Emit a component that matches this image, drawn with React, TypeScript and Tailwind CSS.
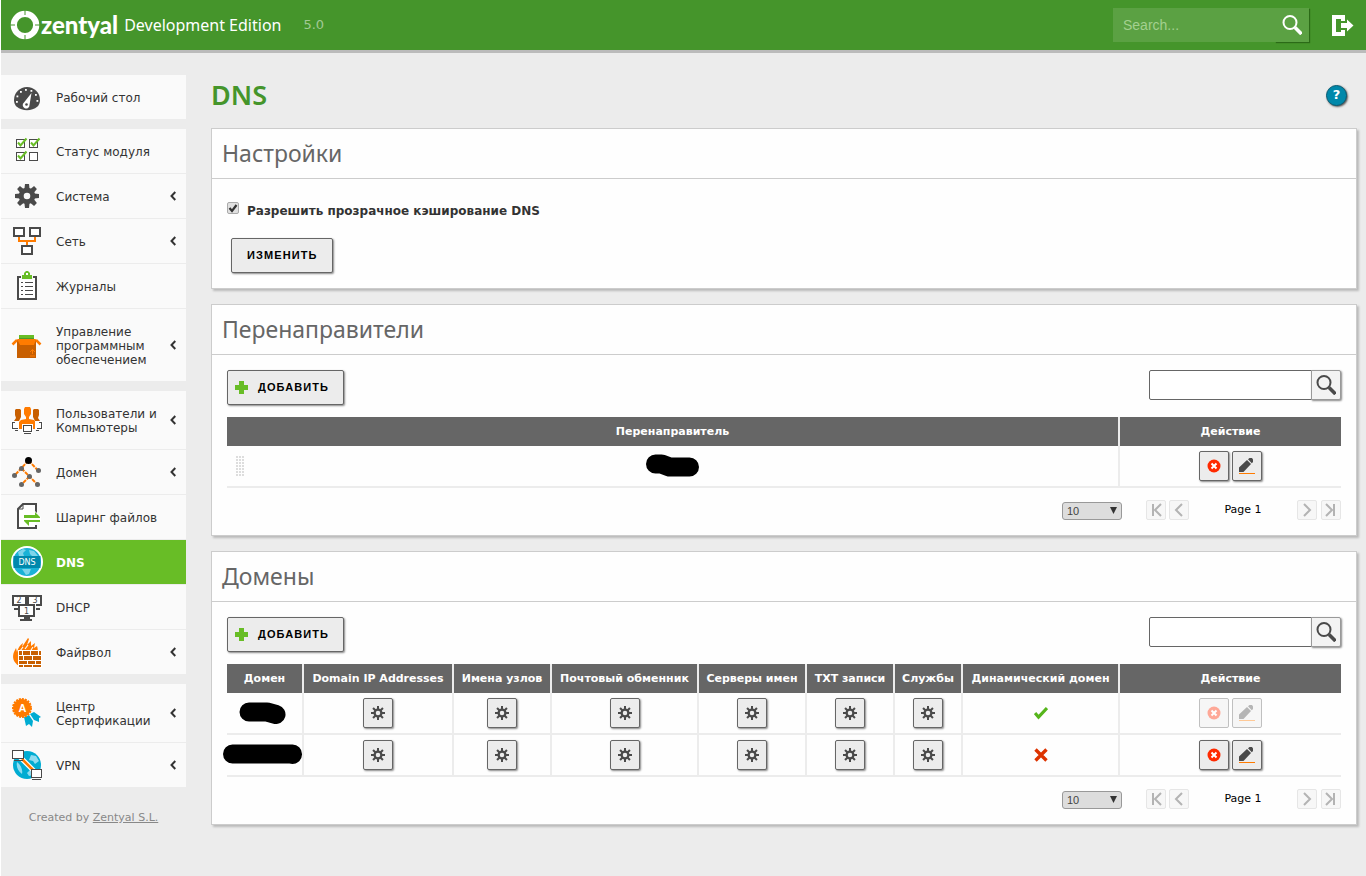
import { useState } from "react";
import type { ReactNode } from "react";
import clsx from "clsx";

const DARK = "#4a4a4a";
const ORANGE = "#ff7b00";
const BROWN = "#c85f00";
const GREEN = "#68bd26";
const TEAL = "#00acd2";

/* ---------- menu icons, all on a 32x32 grid ---------- */

function MenuSvg({ children }: { children: ReactNode }) {
  return (
    <svg viewBox="0 0 32 32" className="-my-2.5 h-8 w-8 shrink-0" aria-hidden="true">
      {children}
    </svg>
  );
}

function DashboardIcon() {
  const dots = [
    [6, 21], [6.5, 15.5], [10, 11], [15, 9], [20.5, 10], [25, 14], [26.5, 20],
  ];
  return (
    <MenuSvg>
      <path d="M3 19a13 13 0 0 1 26 0c0 3-1 5-2.500 6.500-6 5-15 5-21 0C4 24 3 22 3 19z" fill={DARK} />
      {dots.map(([x, y]) => (
        <rect key={`${x}-${y}`} x={x - 1} y={y - 1} width="1.800" height="1.800" fill="#fff" />
      ))}
      <path d="M20.500 12 13 21.500a3.400 3.400 0 1 0 5.500 2.500z" fill="#fff" />
      <circle cx="15.500" cy="23.500" r="1.300" fill={DARK} />
    </MenuSvg>
  );
}

function StatusIcon() {
  return (
    <MenuSvg>
      <g fill="#fff" stroke={DARK} shapeRendering="crispEdges">
        <rect x="5.500" y="4.500" width="8" height="8" />
        <rect x="18.500" y="4.500" width="8" height="8" />
        <rect x="5.500" y="17.500" width="8" height="8" />
        <rect x="18.500" y="17.500" width="8" height="8" />
      </g>
      <g fill="none" stroke={GREEN} strokeWidth="2">
        <path d="M7 7.500 9.500 10.500 15.500 3.500" />
        <path d="M20 7.500 22.500 10.500 28.500 3.500" />
        <path d="M7 20.500 9.500 23.500 15.500 16.500" />
      </g>
    </MenuSvg>
  );
}

const EIGHT = [0, 45, 90, 135, 180, 225, 270, 315];

function SystemIcon() {
  return (
    <MenuSvg>
      {EIGHT.map((a) => (
        <path key={a} d="M14 4h4l.8 7h-5.600z" fill={DARK} transform={`rotate(${a} 16 16)`} />
      ))}
      <circle cx="16" cy="16" r="5.800" fill="none" stroke={DARK} strokeWidth="5" />
    </MenuSvg>
  );
}

function NetworkIcon() {
  return (
    <MenuSvg>
      <g fill="#fff" stroke={DARK} strokeWidth="2">
        <rect x="3" y="3" width="10" height="8" />
        <rect x="19" y="3" width="10" height="8" />
        <rect x="11" y="21" width="10" height="8" />
      </g>
      <path d="M8 12v4h16v-4M16 16v4" fill="none" stroke={ORANGE} strokeWidth="2" />
    </MenuSvg>
  );
}

function LogsIcon() {
  return (
    <MenuSvg>
      <rect x="7" y="7" width="18" height="22" fill="#fff" stroke={DARK} strokeWidth="2" />
      <path d="M10 5h12v5H10z" fill="#fafafa" />
      <path d="M11 5h2V3l2-2h2l2 2v2h2v4H11z" fill={GREEN} />
      <path d="M15 3h2v2h-2z" fill="#fff" />
      <path
        d="M10 12.500h2M14 12.500h8M10 16.500h2M14 16.500h8M10 20.500h2M14 20.500h8M10 24.500h2M14 24.500h8"
        stroke={DARK}
        shapeRendering="crispEdges"
      />
    </MenuSvg>
  );
}

function SoftwareIcon() {
  return (
    <MenuSvg>
      <path d="M8 6h15v5H8z" fill="#4c9a2a" />
      <path d="M8 6h15v3H8z" fill={GREEN} />
      <path d="M6 11h19v18H6z" fill={BROWN} />
      <path d="M6 10h19l-2 6H9z" fill={ORANGE} />
      <path d="M1.500 15.500 6 11M29.500 15.500 25 11" stroke={ORANGE} strokeWidth="2.500" />
      <path d="M21.500 25v-4.500M19 23l2.500-2.500L24 23M19 27h5" fill="none" stroke={ORANGE} />
    </MenuSvg>
  );
}

function UsersIcon() {
  return (
    <MenuSvg>
      <g fill={BROWN}>
        <path d="M5 5h4l1 1v7l-2 4H3l2-3-1-3V6zM23 5h4l1 1v5l-1 3 2 3h-5l-2-4V6z" />
      </g>
      <path d="M14 3h5l1 2v5l-2 3v2l5 1 3 3v6H7v-6l3-3 5-1v-2l-2-3V5z" fill={ORANGE} />
      <g fill="#fff" stroke="#fff" strokeWidth="3">
        <path d="M1.500 18.500h5v6h-5zM25.500 18.500h5v6h-5z" />
        <rect x="12.500" y="21.500" width="8" height="6" />
      </g>
      <g fill="#fff" stroke={DARK} shapeRendering="crispEdges">
        <path d="M4 18.500H1.500v6h5M4 26.500h3M28 18.500h2.500v6h-5M25 26.500h3" />
        <rect x="12.500" y="21.500" width="8" height="6" />
        <path d="M13 29.500h7" />
      </g>
    </MenuSvg>
  );
}

function DomainIcon() {
  return (
    <MenuSvg>
      <path
        d="M17.500 4.500 3.500 19.500M17.500 4.500 27 14.500M10.500 12.500 26.500 28.500M18.500 20.500 10.500 28.500"
        stroke={ORANGE}
        strokeWidth="2"
        strokeDasharray="4 1"
      />
      <circle cx="17.500" cy="4.500" r="3.500" fill="#000" />
      {[[10.5, 12.5], [3.5, 19.5], [27.5, 14.5], [18.5, 20.5], [10.5, 28.5], [26.5, 28.5]].map(([x, y]) => (
        <circle key={`${x}-${y}`} cx={x} cy={y} r="2.500" fill="#666" />
      ))}
    </MenuSvg>
  );
}

function SharingIcon() {
  return (
    <MenuSvg>
      <path d="M25 12V3H12L7 8v19h18v-3" fill="#fff" stroke={DARK} strokeWidth="2" />
      <path d="M12 3v5H7" fill="none" stroke={DARK} />
      <path d="M12 13h11v-4l7 7v4H19v4l-7-5v-3z" fill="#fff" />
      <path d="M13 14h11v-3l5 5v1H13zM29 19v2H18v4l-5-5v-1z" fill={GREEN} />
    </MenuSvg>
  );
}

function DnsIcon() {
  return (
    <MenuSvg>
      <circle cx="16" cy="16" r="15" fill="#1ab2d6" stroke="#fff" strokeWidth="2" />
      <path d="M7 6l5-3 3 1-3 3 1 3H8zM18 4l5 1 4 5h-6l-2-2zM11 23h9l-2 5-3 1z" fill="#7ed4ea" />
      <path d="M2.500 10h27v12h-27z" fill="#0088ac" />
      <text x="16" y="19" textAnchor="middle" fill="#fff" fontSize="8" fontWeight="normal" fontFamily="DejaVu Sans, sans-serif">
        DNS
      </text>
    </MenuSvg>
  );
}

function DhcpIcon() {
  return (
    <MenuSvg>
      <g fill="#fff" stroke={DARK} strokeWidth="2">
        <path d="M7 14H2V5h13v8M17 13V5h13v9h-5" />
        <path d="M3 18h4M25 18h4" />
        <rect x="8" y="14" width="15" height="11" />
      </g>
      <path d="M13 26h6v2h2v2H9v-2h4z" fill={DARK} />
      <g fill={DARK} fontSize="8" textAnchor="middle" fontFamily="DejaVu Sans, sans-serif">
        <text x="8" y="12">2</text>
        <text x="24" y="12">3</text>
        <text x="15.500" y="23">1</text>
      </g>
    </MenuSvg>
  );
}

function FirewallIcon() {
  return (
    <MenuSvg>
      <path
        d="M8 30C2 26 1 21 3 16l2-4 1 4c1-4 3-7 6-9l-1 4 6-9 1 1-2 6 4-4v5l4-3-1 5 3-2c1 3 1 5 0 8z"
        fill={ORANGE}
      />
      <path d="M9 15l3-4M14 13l3-4M20 14l2-3" stroke="#fafafa" strokeWidth="1.200" />
      <path d="M7 14h24v18H7z" fill="#fff" />
      <path
        d="M12 15h7v4h-7zM20 15h7v4h-7zM8 20h4v4H8zM13 20h8v4h-8zM22 20h8v4h-8zM8 25h8v3H8zM17 25h7v3h-7zM25 25h5v3h-5zM8 29h4v2H8zM13 29h8v2h-8zM22 29h8v2h-8zM8 15h3v4H8zM28 15h2v4h-2z"
        fill={BROWN}
        shapeRendering="crispEdges"
      />
    </MenuSvg>
  );
}

function CertificateIcon() {
  return (
    <MenuSvg>
      <path d="M13 20l5-2 4 6-1 6-3-3-3 2zM19 17l4-2 7 5-2 1v4l-5-2z" fill={TEAL} />
      <circle cx="11" cy="11" r="9" fill={ORANGE} stroke={ORANGE} strokeWidth="2" strokeDasharray="2 1" />
      <text x="11.500" y="15" textAnchor="middle" fill="#fff" fontSize="11" fontWeight="bold" fontFamily="Liberation Sans, sans-serif">
        A
      </text>
    </MenuSvg>
  );
}

function VpnIcon() {
  return (
    <MenuSvg>
      <circle cx="16" cy="16" r="14" fill={TEAL} />
      <path d="M6 13c4 3 6 8 5 12-4-3-6-7-5-12zM20 6l5 1 3 5-4 3-2-3-4-1zM16 24l4-4 2 6-4 1z" fill="#8fdcf0" />
      <path d="M9 8 23 22" stroke="#fff" strokeWidth="5" />
      <path d="M11 10 22 21" stroke={ORANGE} strokeWidth="2.500" />
      <g fill="#fff" stroke={DARK} shapeRendering="crispEdges">
        <rect x="1.500" y="1.500" width="11" height="8" />
        <path d="M3 11.500h9" />
        <rect x="20.500" y="20.500" width="10" height="8" />
        <path d="M21 30.500h9" />
      </g>
    </MenuSvg>
  );
}

/* ---------- small icons ---------- */

function Magnifier({ color }: { color: string }) {
  return (
    <svg viewBox="0 0 20 20" className="h-5 w-5" fill="none" stroke={color} aria-hidden="true">
      <circle cx="8" cy="7.500" r="6.500" strokeWidth="2" />
      <path d="M13 12.500 19.500 19" strokeWidth="3.600" />
    </svg>
  );
}

function GearIcon() {
  return (
    <svg viewBox="0 0 14 14" className="h-3.5 w-3.5" aria-hidden="true">
      <circle cx="7" cy="7" r="3.400" fill="none" stroke={DARK} strokeWidth="2.300" />
      {EIGHT.map((a) => (
        <path key={a} d="M7 0v3.500" stroke={DARK} strokeWidth="2" transform={`rotate(${a} 7 7)`} />
      ))}
    </svg>
  );
}

function DeleteIcon() {
  return (
    <svg viewBox="0 0 14 14" className="h-3.5 w-3.5" aria-hidden="true">
      <circle cx="7" cy="7" r="6.500" fill="#ff2a00" />
      <path d="M4.500 4.500l5 5M9.500 4.500l-5 5" stroke="#fff" strokeWidth="2" />
    </svg>
  );
}

function EditIcon() {
  return (
    <svg viewBox="0 0 16 16" className="h-4 w-4" aria-hidden="true">
      <path d="M0 14v-4.500L8 2l4 4-7.500 8zM9 1.200 10.500 0H13l1 1.500V4l-1.200 1.300z" fill={DARK} />
      <path d="M0 15h16v1H0z" fill={ORANGE} />
    </svg>
  );
}

function PlusIcon() {
  return (
    <svg viewBox="0 0 13 13" className="h-[13px] w-[13px]" aria-hidden="true">
      <path d="M4 0h5v4h4v5H9v4H4V9H0V4h4z" fill={GREEN} />
    </svg>
  );
}

function Mark({ on }: { on: boolean }) {
  return on ? (
    <svg viewBox="0 0 14 14" className="mx-auto h-3.5 w-3.5" role="img" aria-label="on">
      <path d="M1 7l3.500 4L13 2" fill="none" stroke="#56b51b" strokeWidth="3.200" />
    </svg>
  ) : (
    <svg viewBox="0 0 14 14" className="mx-auto h-3.5 w-3.5" role="img" aria-label="off">
      <path d="M1.500 1.500 12.500 12.500M12.500 1.500 1.500 12.500" stroke="#dd3300" strokeWidth="3.400" />
    </svg>
  );
}

/* ---------- sidebar ---------- */

interface MenuItem {
  label: string;
  icon: ReactNode;
  submenu?: boolean;
  active?: boolean;
}

const MENU: MenuItem[][] = [
  [{ label: "Рабочий стол", icon: <DashboardIcon /> }],
  [
    { label: "Статус модуля", icon: <StatusIcon /> },
    { label: "Система", icon: <SystemIcon />, submenu: true },
    { label: "Сеть", icon: <NetworkIcon />, submenu: true },
    { label: "Журналы", icon: <LogsIcon /> },
    { label: "Управление программным обеспечением", icon: <SoftwareIcon />, submenu: true },
  ],
  [
    { label: "Пользователи и Компьютеры", icon: <UsersIcon />, submenu: true },
    { label: "Домен", icon: <DomainIcon />, submenu: true },
    { label: "Шаринг файлов", icon: <SharingIcon /> },
    { label: "DNS", icon: <DnsIcon />, active: true },
    { label: "DHCP", icon: <DhcpIcon /> },
    { label: "Файрвол", icon: <FirewallIcon />, submenu: true },
  ],
  [
    { label: "Центр Сертификации", icon: <CertificateIcon />, submenu: true },
    { label: "VPN", icon: <VpnIcon />, submenu: true },
  ],
];

function Sidebar() {
  return (
    <aside className="w-[185px] shrink-0 pt-[22px]">
      <nav className="flex flex-col gap-2.5">
        {MENU.map((group, i) => (
          <ul key={i} className="divide-y divide-[#ececec] bg-[#fafafa]">
            {group.map((item) => (
              <li key={item.label}>
                <a
                  href="#"
                  className={clsx(
                    "flex items-center gap-[13px] px-2.5 py-3.5 text-xs leading-[14px]",
                    item.active ? "bg-[#68bd26] font-bold text-white" : "text-[#333]",
                  )}
                >
                  {item.icon}
                  <span className="w-[105px] flex-1 pt-0.5">{item.label}</span>
                  {item.submenu && (
                    <svg viewBox="0 0 6 10" className="-ml-4 h-2.5 w-1.5 shrink-0" aria-hidden="true">
                      <path d="M5.300 1 1.500 5l3.800 4" fill="none" stroke="#333" strokeWidth="2" />
                    </svg>
                  )}
                </a>
              </li>
            ))}
          </ul>
        ))}
      </nav>
      <p className="mt-[25px] text-center text-[11px] leading-3 text-[#888]">
        Created by{" "}
        <a href="#" className="underline">
          Zentyal S.L.
        </a>
      </p>
    </aside>
  );
}

/* ---------- header ---------- */

function Header() {
  return (
    <header className="flex h-[53px] items-center justify-between border-b-[3px] border-[#bbb] bg-[#45952b] pr-3 pl-[9px]">
      <div className="flex items-center">
        <svg viewBox="0 0 30 30" className="h-[30px] w-[30px]" aria-hidden="true">
          <circle cx="15" cy="15" r="11.200" fill="none" stroke="#fff" strokeWidth="6.200" />
          <path d="M15 0v5M15 25v5M0 15h5M25 15h5" stroke="#45952b" />
        </svg>
        <span className="ml-px font-[Lato,sans-serif] text-2xl leading-8 font-black text-white">zentyal</span>
        <span className="ml-1.5 font-['Noto_Sans',sans-serif] text-base text-white">Development Edition</span>
        <span className="ml-[22px] text-[13px] text-white/50">5.0</span>
      </div>
      <div className="flex items-center">
        <form className="flex" onSubmit={(e) => e.preventDefault()}>
          <input
            type="text"
            aria-label="Search"
            placeholder="Search..."
            className="h-[34px] w-[162px] bg-[#5ba143] px-2.5 font-['Liberation_Sans',sans-serif] text-sm text-white outline-none placeholder:text-[#a3d08f]"
          />
          <button
            type="submit"
            aria-label="Search"
            className="flex h-[34px] w-[34px] items-center justify-center bg-[#5ba143] shadow-[1px_1px_1px_#2b6a17]"
          >
            <Magnifier color="#fff" />
          </button>
        </form>
        <a href="#" aria-label="Logout" className="ml-[23px]">
          <svg viewBox="0 0 22 22" className="h-[22px] w-[22px]" aria-hidden="true">
            <path d="M0 1h13v6H9V5H4v13h5v-2h4v6H0z" fill="#fff" />
            <path d="M9 9h6V5.500l6.500 6-6.500 6V14H9z" fill="#fff" />
          </svg>
        </a>
      </div>
    </header>
  );
}

/* ---------- content building blocks ---------- */

function Panel({ title, children }: { title: string; children: ReactNode }) {
  return (
    <section className="border border-[#ccc] bg-[#fefefe] shadow-[2px_2px_2px_#bbb]">
      <h2 className="border-b border-[#ccc] px-2.5 py-2 font-['Noto_Sans',sans-serif] text-[23px] leading-[33px] text-[#666]">
        {title}
      </h2>
      <div className="p-[15px]">{children}</div>
    </section>
  );
}

function TextButton({ icon, children }: { icon?: ReactNode; children: ReactNode }) {
  return (
    <button
      type="button"
      className={clsx(
        "flex h-[35px] items-center gap-2.5 rounded-xs border border-[#666] bg-[#ececec] pr-3.5 font-['Liberation_Sans',sans-serif] text-[11px] font-bold tracking-widest text-black uppercase shadow-[1px_1px_2px_#888]",
        icon ? "pl-[7px]" : "pl-[15px]",
      )}
    >
      {icon}
      <span>{children}</span>
    </button>
  );
}

function IconButton({ label, disabled, children }: { label: string; disabled?: boolean; children: ReactNode }) {
  return (
    <button
      type="button"
      aria-label={label}
      disabled={disabled}
      className="flex h-[30px] w-[30px] items-center justify-center rounded-xs border border-[#666] bg-[#ececec] shadow-[1px_1px_2px_#888] disabled:opacity-40 disabled:shadow-none"
    >
      {children}
    </button>
  );
}

function Actions({ disabled }: { disabled?: boolean }) {
  return (
    <div className="flex justify-center gap-[3px]">
      <IconButton label="Удалить" disabled={disabled}>
        <DeleteIcon />
      </IconButton>
      <IconButton label="Редактировать" disabled={disabled}>
        <EditIcon />
      </IconButton>
    </div>
  );
}

function Toolbar({ name }: { name: string }) {
  return (
    <div className="mb-3 flex items-start justify-between">
      <TextButton icon={<PlusIcon />}>Добавить</TextButton>
      <form className="flex" onSubmit={(e) => e.preventDefault()}>
        <input
          type="text"
          aria-label={`Поиск: ${name}`}
          className="h-[30px] w-[163px] rounded-l-xs border border-[#666] bg-white px-2 text-xs outline-none"
        />
        <button
          type="submit"
          aria-label={`Найти: ${name}`}
          className="-ml-px flex h-[30px] w-[30px] items-center justify-center rounded-r-xs border border-[#999] bg-[#f3f3f3] shadow-[1px_1px_2px_#888]"
        >
          <Magnifier color={DARK} />
        </button>
      </form>
    </div>
  );
}

const PAGER_PATHS = {
  first: "M6 3v12M14 3 8 9l6 6",
  prev: "M12 3 6 9l6 6",
  next: "M6 3l6 6-6 6",
  last: "M12 3v12M4 3l6 6-6 6",
};

function PagerButton({ kind }: { kind: keyof typeof PAGER_PATHS }) {
  return (
    <button
      type="button"
      aria-label={kind}
      disabled
      className="flex h-5 w-5 items-center justify-center rounded-xs border border-[#e6e6e6] bg-[#f7f7f7]"
    >
      <svg viewBox="0 0 18 18" className="h-[18px] w-[18px]" aria-hidden="true">
        <path d={PAGER_PATHS[kind]} fill="none" stroke="#b3b3b3" strokeWidth="2" />
      </svg>
    </button>
  );
}

function Pager() {
  return (
    <div className="mt-3 flex items-start justify-end">
      <div className="relative mt-0.5 mr-6">
        <select
          aria-label="Page size"
          className="block h-[18px] w-[60px] appearance-none rounded-[3px] border border-[#999] bg-[#ddd] pl-1 font-['Liberation_Sans',sans-serif] text-[11px] leading-4 text-[#444]"
        >
          <option>10</option>
          <option>50</option>
          <option>100</option>
        </select>
        <svg viewBox="0 0 8 7" className="pointer-events-none absolute top-[5px] right-1 h-[7px] w-2" aria-hidden="true">
          <path d="M0 0h7L3.500 7z" fill="#333" />
        </svg>
      </div>
      <div className="flex gap-[3px]">
        <PagerButton kind="first" />
        <PagerButton kind="prev" />
      </div>
      <span className="w-[108px] text-center text-[11px] leading-5 text-black">Page 1</span>
      <div className="flex gap-1">
        <PagerButton kind="next" />
        <PagerButton kind="last" />
      </div>
    </div>
  );
}

function Th({ className, children }: { className?: string; children: ReactNode }) {
  return (
    <th
      scope="col"
      className={clsx(
        "h-[29px] border-r-2 border-[#ececec] bg-[#666] p-0 pt-px font-bold whitespace-nowrap text-white last:border-r-0",
        className,
      )}
    >
      {children}
    </th>
  );
}

function Td({ children }: { children: ReactNode }) {
  return <td className="h-[42px] border-r-2 border-b-2 border-[#ececec] p-0 last:border-r-0">{children}</td>;
}

const TABLE = "w-full border-separate border-spacing-0 text-center text-[11px] leading-[14px]";

/* ---------- tables ---------- */

function ForwardersTable() {
  return (
    <table className={TABLE}>
      <thead>
        <tr>
          <Th>Перенаправитель</Th>
          <Th className="w-[221px]">Действие</Th>
        </tr>
      </thead>
      <tbody>
        <tr>
          <Td>
            <div className="flex items-center px-[9px]">
              <svg viewBox="0 0 8 20" className="h-5 w-2" shapeRendering="crispEdges" aria-hidden="true">
                {[0, 3, 6, 9, 12, 15, 18].map((y) => (
                  <path key={y} d={`M0 ${y + 1}h2m1 0h2m1 0h2`} stroke="#ddd" strokeWidth="2" />
                ))}
              </svg>
              <div className="flex flex-1 justify-center pr-2">
                <svg viewBox="0 0 54 24" className="h-6 w-[54px]" role="img" aria-label="hidden">
                  <path d="M9.500 10h6l8 3h20" fill="none" stroke="#000" strokeWidth="19" strokeLinecap="round" strokeLinejoin="round" />
                </svg>
              </div>
            </div>
          </Td>
          <Td>
            <Actions />
          </Td>
        </tr>
      </tbody>
    </table>
  );
}

const DOMAIN_COLUMNS = ["Domain IP Addresses", "Имена узлов", "Почтовый обменник", "Серверы имен", "TXT записи", "Службы"];

const DOMAIN_WIDTHS = ["w-[150px]", "w-[98px]", "w-[147px]", "w-[108px]", "w-[88px]", "w-[68px]"];

const DOMAINS = [
  { mask: "M26 10h18l9 2.500", dynamic: true, locked: true },
  { mask: "M9.500 10h60v.5", dynamic: false, locked: false },
];

function DomainsTable() {
  return (
    <table className={TABLE}>
      <thead>
        <tr>
          <Th className="w-[77px]">Домен</Th>
          {DOMAIN_COLUMNS.map((col, i) => (
            <Th key={col} className={DOMAIN_WIDTHS[i]}>
              {col}
            </Th>
          ))}
          <Th className="w-[157px]">Динамический домен</Th>
          <Th className="w-[221px]">Действие</Th>
        </tr>
      </thead>
      <tbody>
        {DOMAINS.map((row) => (
          <tr key={row.mask}>
            <Td>
              <div className="-mx-1.5 flex justify-center">
                <svg viewBox="0 0 84 22" className="h-[22px] w-[84px] shrink-0" role="img" aria-label="hidden">
                  <path d={row.mask} fill="none" stroke="#000" strokeWidth="19" strokeLinecap="round" strokeLinejoin="round" />
                </svg>
              </div>
            </Td>
            {DOMAIN_COLUMNS.map((col) => (
              <Td key={col}>
                <div className="flex justify-center">
                  <IconButton label={col}>
                    <GearIcon />
                  </IconButton>
                </div>
              </Td>
            ))}
            <Td>
              <Mark on={row.dynamic} />
            </Td>
            <Td>
              <Actions disabled={row.locked} />
            </Td>
          </tr>
        ))}
      </tbody>
    </table>
  );
}

export default function App() {
  const [caching, setCaching] = useState(true);

  return (
    <div className="min-h-screen border-l border-white bg-[#ececec] font-['DejaVu_Sans',sans-serif] text-xs text-[#333]">
      <Header />
      <div className="flex">
        <Sidebar />
        <main className="min-w-0 flex-1 pt-[22px] pr-[9px] pb-12 pl-[25px]">
          <div className="mb-[13px] flex h-10 items-center justify-between pr-2.5">
            <h1 className="font-['Noto_Sans',sans-serif] text-[27px] leading-10 font-semibold text-[#45952b]">DNS</h1>
            <button
              type="button"
              aria-label="Help"
              className="flex h-[21px] w-[21px] items-center justify-center rounded-full border border-[#0a5c73] bg-[#0088aa] text-[13px] leading-5 font-bold text-white shadow-[1px_1px_2px_#555]"
            >
              ?
            </button>
          </div>

          <div className="flex flex-col gap-[15px]">
            <Panel title="Настройки">
              <div className="flex items-start gap-2 pt-2">
                <span className="relative flex">
                  <input
                    id="transparent-cache"
                    type="checkbox"
                    checked={caching}
                    onChange={(e) => setCaching(e.target.checked)}
                    className="h-3 w-3 appearance-none rounded-xs border border-[#aaa] bg-[#e0e0e0]"
                  />
                  {caching && (
                    <svg viewBox="0 0 12 12" className="pointer-events-none absolute inset-0 h-3 w-3" aria-hidden="true">
                      <path d="M2.500 6l2.500 3L9.500 3" fill="none" stroke="#333" strokeWidth="2.200" />
                    </svg>
                  )}
                </span>
                <label htmlFor="transparent-cache" className="leading-[18px] font-bold">
                  Разрешить прозрачное кэширование DNS
                </label>
              </div>
              <div className="mt-[18px] ml-1 flex">
                <TextButton>Изменить</TextButton>
              </div>
            </Panel>

            <Panel title="Перенаправители">
              <Toolbar name="Перенаправители" />
              <ForwardersTable />
              <Pager />
            </Panel>

            <Panel title="Домены">
              <Toolbar name="Домены" />
              <DomainsTable />
              <Pager />
            </Panel>
          </div>
        </main>
      </div>
    </div>
  );
}
